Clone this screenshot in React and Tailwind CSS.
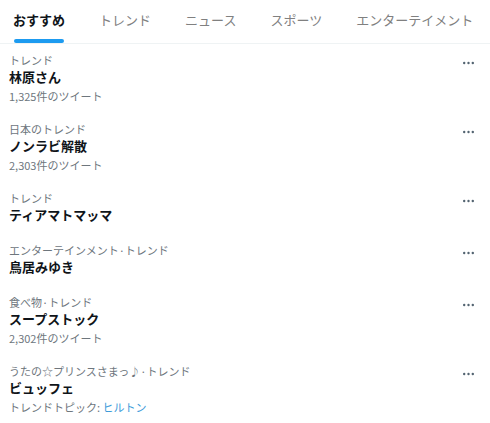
import React from 'react';

const tabs = ['おすすめ', 'トレンド', 'ニュース', 'スポーツ', 'エンターテイメント'];

const trends = [
    { category: 'トレンド', title: '林原さん', meta: '1,325件のツイート' },
    { category: '日本のトレンド', title: 'ノンラビ解散', meta: '2,303件のツイート' },
    { category: 'トレンド', title: 'ティアマトマッマ' },
    { category: 'エンターテインメント·トレンド', title: '鳥居みゆき' },
    { category: '食べ物·トレンド', title: 'スープストック', meta: '2,302件のツイート' },
    { category: 'うたの☆プリンスさまっ♪·トレンド', title: 'ビュッフェ', topic: 'ヒルトン' },
];

const MoreDots = () => (
    <svg width="11" height="4" viewBox="0 0 11 4" className="text-[#536471]">
        <circle cx="1.2" cy="2" r="1.2" fill="currentColor" />
        <circle cx="5.5" cy="2" r="1.2" fill="currentColor" />
        <circle cx="9.8" cy="2" r="1.2" fill="currentColor" />
    </svg>
);

const TrendRow = ({ item }) => (
    <div className="flex justify-between pl-[9px] pr-[16px] pt-[9px] pb-[8px]">
        <div className="flex flex-col">
            <span className="text-[11px] leading-[15px] text-[#6e767d]">{item.category}</span>
            <span className="text-[13px] leading-[17px] mb-[3px] font-bold text-[#0f1419]">{item.title}</span>
            {item.meta && (
                <span className="text-[11px] leading-[17px] text-[#6e767d]">{item.meta}</span>
            )}
            {item.topic && (
                <span className="text-[11px] leading-[17px] text-[#6e767d]">
                    トレンドトピック: <span className="text-[#3a9ad9]">{item.topic}</span>
                </span>
            )}
        </div>
        <div className="pt-[8px]">
            <MoreDots />
        </div>
    </div>
);

export default function App() {
    return (
        <div className="w-[490px] h-[423px] overflow-hidden bg-white font-['Noto_Sans_CJK_JP','Noto_Sans',sans-serif]">
            <div className="flex gap-[34px] pl-[13px] h-[44px] border-b border-[#eff3f4]">
                {tabs.map((tab, i) => (
                    <div key={tab} className="flex flex-col pt-[10px]">
                        <span
                            className={
                                i === 0
                                    ? 'text-[13px] leading-[20px] font-bold text-[#0f1419]'
                                    : 'text-[13px] leading-[20px] text-[#808080]'
                            }
                        >
                            {tab}
                        </span>
                        {i === 0 && <div className="mt-[9px] mx-[1px] h-[4px] rounded-full bg-[#1d9bf0]" />}
                    </div>
                ))}
            </div>
            <div className="flex flex-col">
                {trends.map((item, i) => (
                    <TrendRow key={i} item={item} />
                ))}
            </div>
        </div>
    );
}
